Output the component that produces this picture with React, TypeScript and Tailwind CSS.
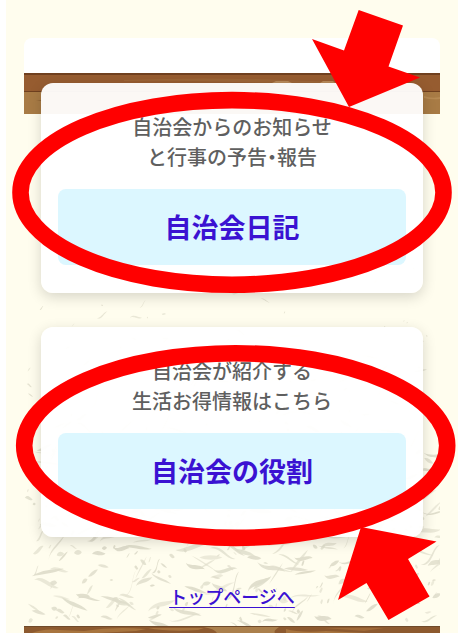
type Point = [number, number];

type NoticeCardProps = {
  lines: string[];
  label: string;
  href: string;
  ring: { cx: number; cy: number };
  arrow: Point[];
};

const cards: NoticeCardProps[] = [
  {
    lines: ["自治会からのお知らせ", "と行事の予告・報告"],
    label: "自治会日記",
    href: "#diary",
    ring: { cx: 191, cy: 109.4 },
    arrow: [
      [317.7, -73],
      [362, -57.5],
      [347.5, -16.5],
      [379, -5.5],
      [308, 24],
      [271, -44],
      [303, -32.5]
    ]
  },
  {
    lines: ["自治会が紹介する", "生活お得情報はこちら"],
    label: "自治会の役割",
    href: "#role",
    ring: { cx: 194.7, cy: 118.6 },
    arrow: [
      [320, 200],
      [395.5, 214.5],
      [367, 232],
      [388.5, 269.5],
      [347.5, 293],
      [325.5, 256],
      [297, 273]
    ]
  }
];

// small seeded generator so the paper grain is the same on every render
function createRandom(seed: number) {
  let state = seed;
  return () => {
    state = (state * 1664525 + 1013904223) % 4294967296;
    return state / 4294967296;
  };
}

// bent slivers, sparse and small at the top, dense and long near the floor
function createFibres() {
  const random = createRandom(71);
  const fibres: { d: string; opacity: number }[] = [];

  for (let i = 0; i < 1000; i++) {
    const x = random() * 416;
    const y = 170 + random() * 380;
    const keep = Math.min(1, Math.pow((y - 130) / 330, 2) + (x / 416) * 0.12);
    const skip = random();
    const scale = Math.min(1, Math.max(0.35, (y - 130) / 300));
    const length = (3 + Math.pow(random(), 2) * 30) * scale;
    const rising = random() < 0.45;
    const angle = (rising ? -0.75 : 0.2) + (random() - 0.5) * 0.9;
    const bend = (random() - 0.5) * length * 0.6;
    const thick = (1 + random() * 2.2) * scale;
    const dx = Math.cos(angle) * length;
    const dy = Math.sin(angle) * length;
    const sx = -Math.sin(angle) * bend;
    const sy = Math.cos(angle) * bend;

    if (skip > keep) {
      continue;
    }

    const out = [dx * 0.3 + sx, dy * 0.3 + sy - thick, dx * 0.7 - sx * 0.4, dy * 0.7 - sy * 0.4 - thick, dx, dy];
    const back = [-dx * 0.3 - sx * 0.4, -dy * 0.3 - sy * 0.4 + thick, -dx * 0.7 + sx, -dy * 0.7 + sy + thick, -dx, -dy];

    fibres.push({
      d: `M${x.toFixed(1)} ${y.toFixed(1)}c${out.map((n) => n.toFixed(1)).join(" ")}c${back.map((n) => n.toFixed(1)).join(" ")}z`,
      opacity: 0.55 + random() * 0.45
    });
  }

  return fibres;
}

const fibres = createFibres();

function PaperTexture() {
  return (
    <svg
      viewBox="0 0 416 553"
      preserveAspectRatio="xMidYMax slice"
      className="absolute inset-0 h-full w-full"
      aria-hidden="true"
    >
      {fibres.map((fibre, index) => (
        <path key={index} d={fibre.d} fill="#dfddcb" opacity={fibre.opacity} />
      ))}
    </svg>
  );
}

function WoodBeam() {
  return (
    <svg
      viewBox="0 0 416 41"
      preserveAspectRatio="none"
      className="relative block h-[41px] w-full"
      aria-hidden="true"
    >
      <rect width="416" height="19" fill="#965c30" />
      <rect width="416" height="2" fill="#70401f" />
      <path d="M100 7q80-3 160 0t110 0v2q-90 2-160 0t-110-1z" fill="#9c6537" />
      <path d="M248 10l4-2h12l4 2zM296 10l3-2h10l2 2z" fill="#b88a5a" />
      <rect y="18" width="416" height="1" fill="#6f401f" />
      <rect y="19" width="416" height="22" fill="#a87b45" />
      <path d="M12 28l6-1v1z" fill="#8a5f31" />
      <path d="M400 23q8 3 16 1v2q-9 1-16-1z" fill="#b68a53" />
    </svg>
  );
}

function WoodFloor() {
  return (
    <svg
      viewBox="0 0 416 7"
      preserveAspectRatio="none"
      className="relative block h-[7px] w-full"
      aria-hidden="true"
    >
      <rect width="416" height="7" fill="#8d5a2f" />
      <path
        d="M8 7q12-5 28-3l24 1q30-5 62-2l-10 2-38 2zM124 2h56l-6 2q-30 2-50-2z"
        fill="#a8753f"
      />
      <path d="M180 1h75q-6 4-4 6h-58q-2-4-13-6z" fill="#ab804c" />
      <path d="M262 3q14 4 40 2l40 2h-80z" fill="#a8753f" />
      <path d="M300 2h60l-20 3z" fill="#a06a38" />
      <rect width="416" height="1" fill="#6e4a2a" />
    </svg>
  );
}

function NoticeCard({ lines, label, href, ring, arrow }: NoticeCardProps) {
  return (
    <section className="relative rounded-xl bg-white/95 px-[17px] pt-[29px] pb-7 shadow-[0_4px_14px_rgba(0,0,0,0.16)]">
      <p className="text-center text-[20px] leading-[30px] font-medium text-[#5f5f5f] [font-feature-settings:'halt']">
        {lines.map((line) => (
          <span key={line} className="block">
            {line}
          </span>
        ))}
      </p>
      <a
        href={href}
        className="mt-[17px] flex h-[76px] items-center justify-center rounded-lg bg-[#dcf7ff] text-[27px] font-bold text-[#3a12d2]"
      >
        {label}
      </a>
      <svg
        viewBox="0 0 382 210"
        className="pointer-events-none absolute inset-0 h-full w-full overflow-visible"
        aria-hidden="true"
      >
        <ellipse
          cx={ring.cx}
          cy={ring.cy}
          rx="211.5"
          ry="92.3"
          fill="none"
          stroke="#ff0000"
          strokeWidth="16.6"
        />
        <polygon points={arrow.map((point) => point.join(",")).join(" ")} fill="#ff0000" />
      </svg>
    </section>
  );
}

export default function App() {
  return (
    <div className="bg-white pr-2 pl-1.5 font-['Noto_Sans_CJK_JP',sans-serif]">
      <main className="bg-[#fffdee] px-[18px] pt-[38px]">
        <div className="h-[35px] rounded-t-lg bg-white" />
        <div className="relative">
          <PaperTexture />
          <WoodBeam />
          <div className="relative -mt-[31px] flex flex-col gap-[34px] px-[17px]">
            {cards.map((card) => (
              <NoticeCard key={card.label} {...card} />
            ))}
          </div>
          <div className="relative flex h-[89px] items-end justify-center pb-4">
            <a
              href="#top"
              className="text-[18px] leading-[28px] font-medium text-[#3a12d2] underline decoration-1 underline-offset-3 [text-decoration-skip-ink:none]"
            >
              トップページへ
            </a>
          </div>
        </div>
        <WoodFloor />
      </main>
    </div>
  );
}
